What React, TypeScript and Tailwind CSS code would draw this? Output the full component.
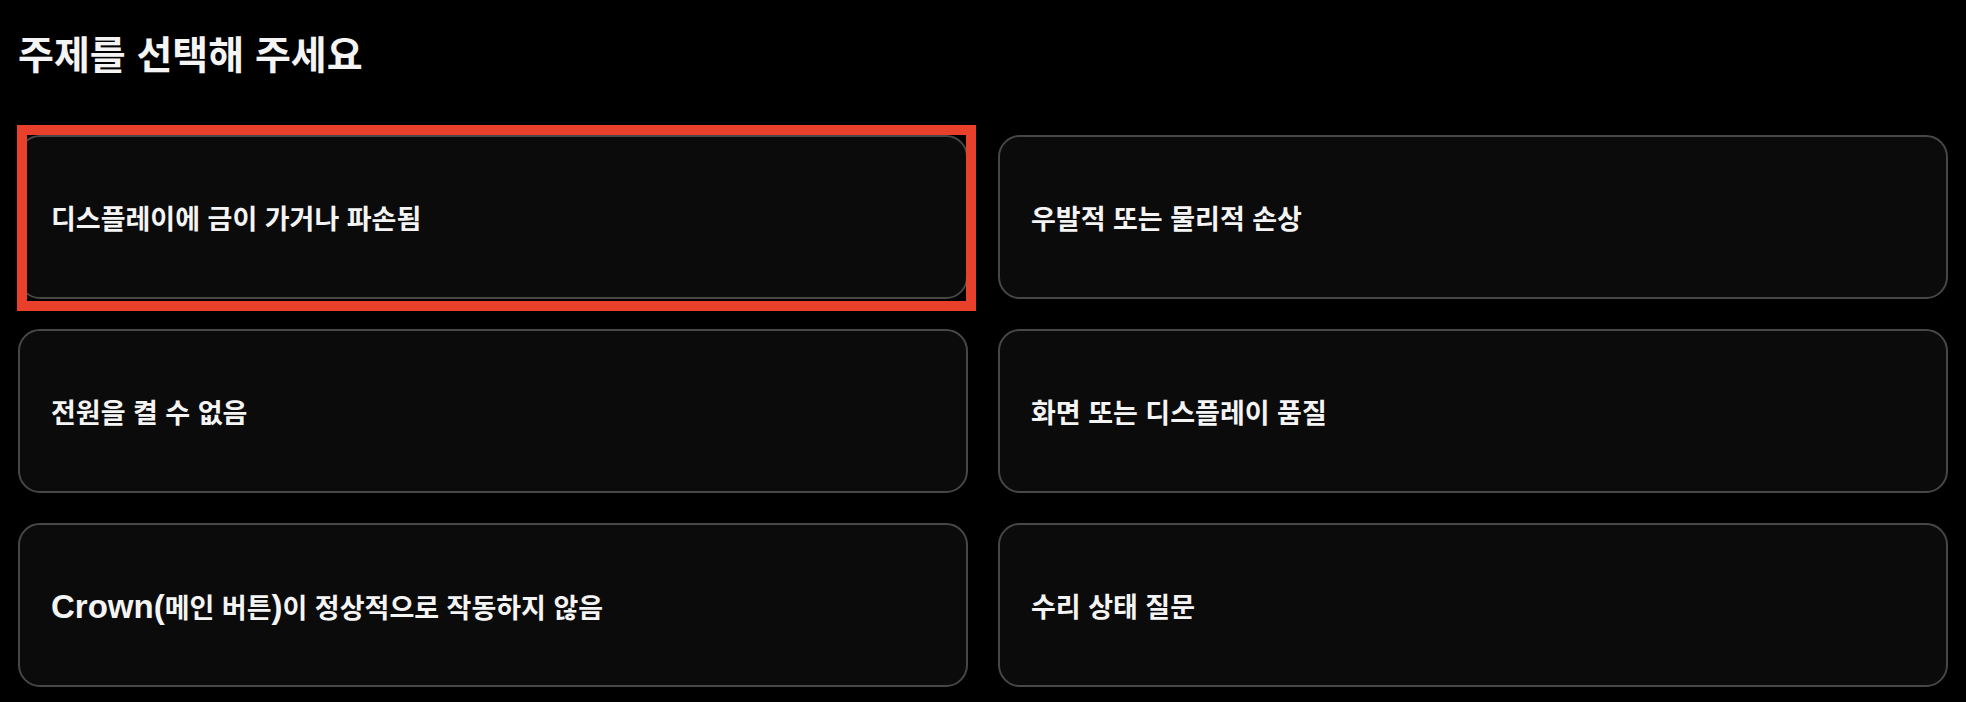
import type { ReactNode } from 'react';

const topics: { id: string; label: ReactNode }[] = [
  { id: 'cracked', label: '디스플레이에 금이 가거나 파손됨' },
  { id: 'damage', label: '우발적 또는 물리적 손상' },
  { id: 'power', label: '전원을 켤 수 없음' },
  { id: 'quality', label: '화면 또는 디스플레이 품질' },
  {
    id: 'crown',
    label: (
      <>
        <span className="text-[33px]">Crown(</span>메인 버튼<span className="text-[33px]">)</span>이 정상적으로 작동하지 않음
      </>
    ),
  },
  { id: 'repair', label: '수리 상태 질문' },
];

export default function App() {
  return (
    <div className="min-h-screen w-full bg-black px-[18px] pt-[31px] text-[#f4f4f4] font-['Liberation_Sans','Noto_Sans_CJK_KR',sans-serif]">
      <h1 className="text-[39px] font-bold leading-[50px]">주제를 선택해 주세요</h1>
      <div className="mt-[54px] grid grid-cols-2 gap-x-[30px] gap-y-[30px]">
        {topics.map((topic, index) => (
          <div key={topic.id} className="relative">
            <button className="flex h-[164px] w-full items-center rounded-[22px] border-2 border-[#474747] bg-[#0b0b0b] pl-[31px] pt-[5px] text-left text-[27px] font-bold leading-[36px]">
              <span>{topic.label}</span>
            </button>
            {index === 0 && (
              <div className="pointer-events-none absolute left-[-1px] top-[-10px] h-[186px] w-[959px] border-[10px] border-[#e8402b]" />
            )}
          </div>
        ))}
      </div>
    </div>
  );
}
